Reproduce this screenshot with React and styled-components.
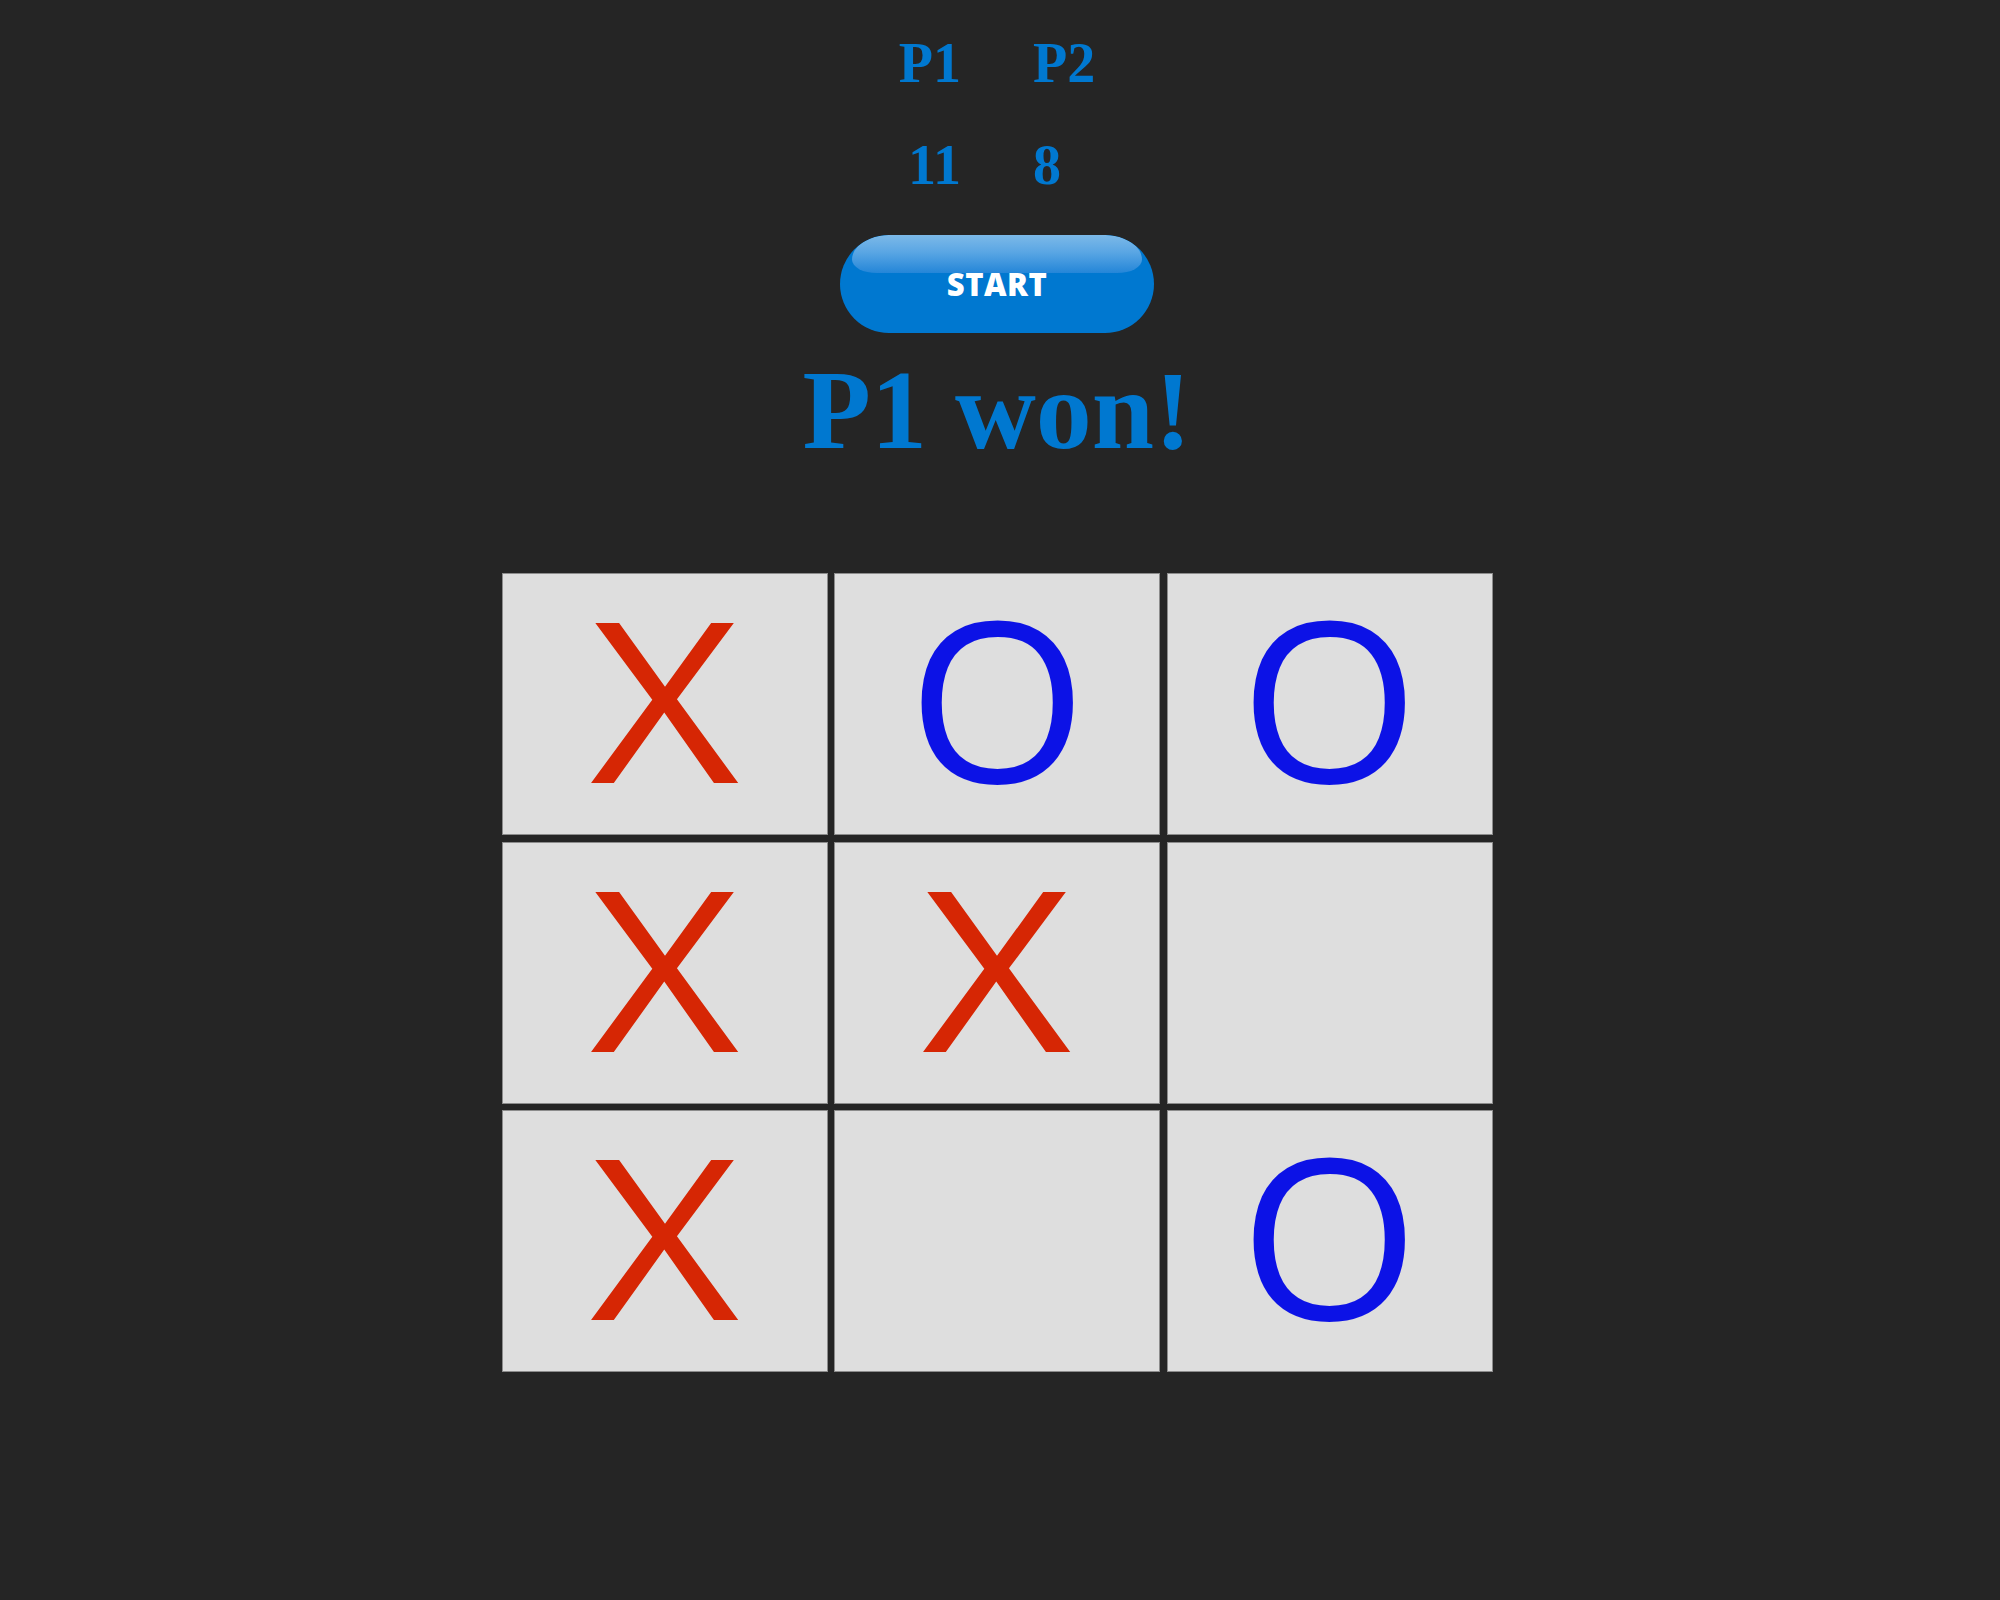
import React from 'react';
import styled, { createGlobalStyle } from 'styled-components';

const GlobalStyle = createGlobalStyle`
  html, body {
    margin: 0;
    padding: 0;
    background: #252525;
  }
`;

const Page = styled.div`
  display: flex;
  flex-direction: column;
  align-items: center;
  min-height: 1600px;
  padding-right: 6px;
  padding-top: 31px;
  box-sizing: border-box;
`;

const ScoreBoard = styled.div`
  display: grid;
  grid-template-columns: auto auto;
  column-gap: 72px;
  row-gap: 38px;
  font-family: "Liberation Serif", "Times New Roman", serif;
  font-weight: bold;
  font-size: 56px;
  line-height: 64px;
  color: #0078d0;
`;

const ScoreCell = styled.div`
  text-align: ${(p) => (p.right ? 'right' : 'left')};
`;

const StartButton = styled.button`
  position: relative;
  margin-top: 38px;
  width: 314px;
  height: 98px;
  border: none;
  border-radius: 49px;
  background: #0078d0;
  color: #fff;
  font-family: "Open Sans", sans-serif;
  font-weight: 800;
  font-size: 31px;
  letter-spacing: 0.5px;
  cursor: pointer;
  padding: 0;
  overflow: hidden;

  &::before {
    content: '';
    position: absolute;
    top: 0;
    left: 12px;
    right: 12px;
    height: 38px;
    border-radius: 44px 44px 30px 30px / 30px 30px 16px 16px;
    background: linear-gradient(to bottom, #7cb9e8 0%, #5aa6e4 45%, #2486d8 100%);
  }
`;

const ButtonLabel = styled.span`
  position: relative;
`;

const Result = styled.h1`
  margin: 13px 0 0;
  font-family: "Liberation Serif", "Times New Roman", serif;
  font-weight: bold;
  font-size: 112px;
  line-height: 128px;
  color: #0078d0;
`;

const Board = styled.div`
  margin-top: 99px;
  display: grid;
  grid-template-columns: repeat(3, 326px);
  grid-auto-rows: 262px;
  gap: 6.5px;
`;

const Cell = styled.div`
  display: flex;
  align-items: center;
  justify-content: center;
  box-sizing: border-box;
  background: #dedede;
  border: 1px solid #8c8c8c;
  font-family: "Open Sans", sans-serif;
  font-size: 224px;
  line-height: 1;
  color: ${(p) => (p.mark === 'X' ? '#d62604' : '#0c12e6')};
`;

const Mark = styled.span`
  display: inline-block;
  transform: translateY(-7px) scaleX(${(p) => (p.mark === 'X' ? 1.15 : 1.03)});
`;

const board = ['X', 'O', 'O', 'X', 'X', '', 'X', '', 'O'];

export default function App() {
  return (
    <>
      <GlobalStyle />
      <Page>
        <ScoreBoard>
          <ScoreCell right>P1</ScoreCell>
          <ScoreCell>P2</ScoreCell>
          <ScoreCell right>11</ScoreCell>
          <ScoreCell>8</ScoreCell>
        </ScoreBoard>
        <StartButton>
          <ButtonLabel>START</ButtonLabel>
        </StartButton>
        <Result>P1 won!</Result>
        <Board>
          {board.map((m, i) => (
            <Cell key={i} mark={m}>
              {m && <Mark mark={m}>{m}</Mark>}
            </Cell>
          ))}
        </Board>
      </Page>
    </>
  );
}
